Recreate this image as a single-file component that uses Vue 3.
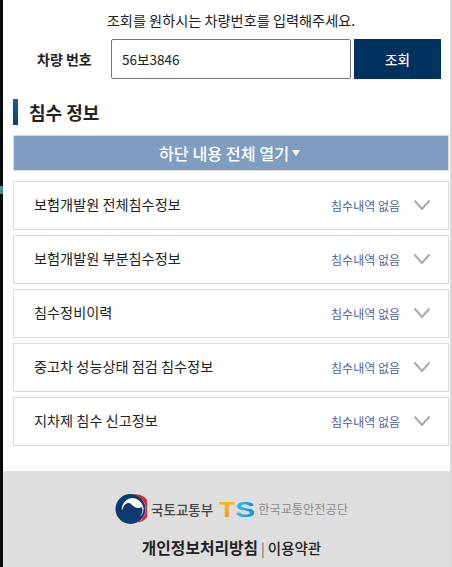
<script setup>
const items = [
  '보험개발원 전체침수정보',
  '보험개발원 부분침수정보',
  '침수정비이력',
  '중고차 성능상태 점검 침수정보',
  '지차제 침수 신고정보'
]
</script>

<template>
  <div class="page">
    <div class="left-edge"><span class="edge-mark"></span></div>

    <div class="main">
      <div class="content">
        <p class="guide">조회를 원하시는 차량번호를 입력해주세요.</p>

        <div class="search">
          <label class="search-label">차량 번호</label>
          <input class="search-input" type="text" value="56보3846" />
          <button class="search-btn">조회</button>
        </div>

        <h2 class="section-title">침수 정보</h2>

        <button class="open-all">하단 내용 전체 열기<span class="caret"></span></button>

        <ul class="list">
          <li v-for="item in items" :key="item" class="row">
            <span class="row-name">{{ item }}</span>
            <span class="row-status">침수내역 없음</span>
            <svg class="chevron" width="18" height="12" viewBox="0 0 18 12">
              <path d="M1.5 1.5 L9 10 L16.5 1.5" fill="none" stroke="#a9a9a9" stroke-width="2" />
            </svg>
          </li>
        </ul>
      </div>

      <footer class="footer">
        <div class="logos">
          <svg class="emblem" width="32" height="30" viewBox="0 0 32 30">
            <circle cx="15.5" cy="15" r="15" fill="#0b3a6e" />
            <path d="M19 0.4 A15 15 0 0 1 22.5 28.5 A13.5 13.5 0 0 0 19 0.4 Z" fill="#d8213a" />
            <path d="M18 4 A12 12 0 0 1 28.6 14 A12 12 0 0 1 23.5 24 A10.5 10.5 0 0 0 27 13 C24 15 20 14 17 11 C14 7.5 9 8.5 7 17 A11 11 0 0 1 18 4 Z" fill="#fff" />
          </svg>
          <span class="molit">국토교통부</span>
          <svg class="ts" width="38" height="26" viewBox="0 0 38 26">
            <defs>
              <linearGradient id="tsOrange" x1="0" y1="0" x2="0" y2="1">
                <stop offset="0" stop-color="#ffc21a" />
                <stop offset="1" stop-color="#f58a0a" />
              </linearGradient>
              <linearGradient id="tsBlue" x1="0" y1="0" x2="1" y2="0">
                <stop offset="0" stop-color="#39bdf0" />
                <stop offset="1" stop-color="#0a8fd6" />
              </linearGradient>
            </defs>
            <text x="0" y="21" class="ts-letter" fill="url(#tsOrange)" textLength="16" lengthAdjust="spacingAndGlyphs">T</text>
            <text x="16" y="21" class="ts-letter" fill="url(#tsBlue)" textLength="20" lengthAdjust="spacingAndGlyphs">S</text>
          </svg>
          <span class="kotsa">한국교통안전공단</span>
        </div>
        <div class="links">
          <a class="privacy">개인정보처리방침</a>
          <span class="sep">|</span>
          <a class="terms">이용약관</a>
        </div>
      </footer>
    </div>

    <div class="right-edge"></div>
  </div>
</template>

<style>
html, body {
  margin: 0;
  background: #fff;
}
</style>

<style scoped>
.page {
  display: flex;
  height: 567px;
  overflow: hidden;
  font-family: "Noto Sans CJK KR", "Noto Sans", sans-serif;
  color: #222;
}

.left-edge {
  position: relative;
  width: 3px;
  background: #0a0a0a;
  flex-shrink: 0;
}

.edge-mark {
  position: absolute;
  top: 186px;
  left: 0;
  width: 3px;
  height: 8px;
  background: #4d8a8c;
}

.right-edge {
  width: 2px;
  background: #d9d9d9;
  flex-shrink: 0;
}

.main {
  flex: 1;
  display: flex;
  flex-direction: column;
  min-width: 0;
}

.content {
  flex: 1;
  padding: 0 1px 0 10px;
}

.guide {
  margin: 0;
  padding-top: 9px;
  height: 39px;
  box-sizing: border-box;
  line-height: 22px;
  text-align: center;
  font-size: 14.2px;
}

.search {
  display: flex;
  align-items: stretch;
  height: 40px;
}

.search-label {
  width: 98px;
  padding-left: 24px;
  box-sizing: border-box;
  line-height: 40px;
  font-size: 14px;
  font-weight: 700;
}

.search-input {
  width: 240px;
  box-sizing: border-box;
  padding: 0 10px;
  border: 1px solid #767676;
  border-radius: 2px;
  font-family: inherit;
  font-size: 13.5px;
  color: #222;
  outline: none;
}

.search-btn {
  width: 87px;
  margin-left: 3px;
  border: none;
  background: #003260;
  color: #fff;
  font-family: inherit;
  font-size: 13.5px;
  font-weight: 500;
}

.section-title {
  margin: 20px 0 10px;
  padding-left: 11px;
  height: 26px;
  border-left: 5px solid #0d4f8b;
  border-image: linear-gradient(#14649f, #0a3d6e) 1;
  line-height: 26px;
  font-size: 18px;
  font-weight: 700;
}

.open-all {
  display: flex;
  align-items: center;
  justify-content: center;
  gap: 3px;
  width: 100%;
  height: 36px;
  box-sizing: border-box;
  padding: 0 3px 0 0;
  border: 1px solid #dcdcdc;
  background: #7f9dc0;
  color: #fff;
  font-family: inherit;
  font-size: 16.2px;
  font-weight: 500;
}

.caret {
  width: 0;
  height: 0;
  border-left: 4.5px solid transparent;
  border-right: 4.5px solid transparent;
  border-top: 6px solid #fff;
}

.list {
  list-style: none;
  margin: 10px 0 0;
  padding: 0;
  display: flex;
  flex-direction: column;
  gap: 5px;
}

.row {
  display: flex;
  align-items: center;
  height: 49px;
  box-sizing: border-box;
  padding: 0 17px 1px 20px;
  border: 1px solid #dcdcdc;
  background: #fff;
}

.row-name {
  flex: 1;
  padding-bottom: 3px;
  font-size: 14.2px;
  color: #222;
}

.row-status {
  font-size: 12px;
  color: #4f5fa8;
  margin-right: 13px;
}

.footer {
  height: 96px;
  flex-shrink: 0;
  padding-left: 10px;
  box-sizing: border-box;
  background: #dedede;
  display: flex;
  flex-direction: column;
  align-items: center;
}

.logos {
  display: flex;
  align-items: center;
  margin-top: 22px;
  height: 32px;
}

.molit {
  margin-left: 4px;
  font-size: 13.5px;
  font-weight: 500;
  color: #444;
}

.ts {
  margin-left: 6px;
}

.ts-letter {
  font-family: "Liberation Sans", sans-serif;
  font-size: 22px;
  font-weight: 700;
}

.kotsa {
  margin-left: 1px;
  font-size: 12.2px;
  color: #8a8a8a;
}

.links {
  margin-top: 11px;
  display: flex;
  align-items: center;
  gap: 3px;
  font-size: 15.8px;
  line-height: 24px;
  color: #222;
}

.privacy {
  font-weight: 700;
}

.sep {
  font-size: 14px;
  color: #667;
}

.terms {
  font-weight: 500;
  font-size: 14.5px;
}
</style>
